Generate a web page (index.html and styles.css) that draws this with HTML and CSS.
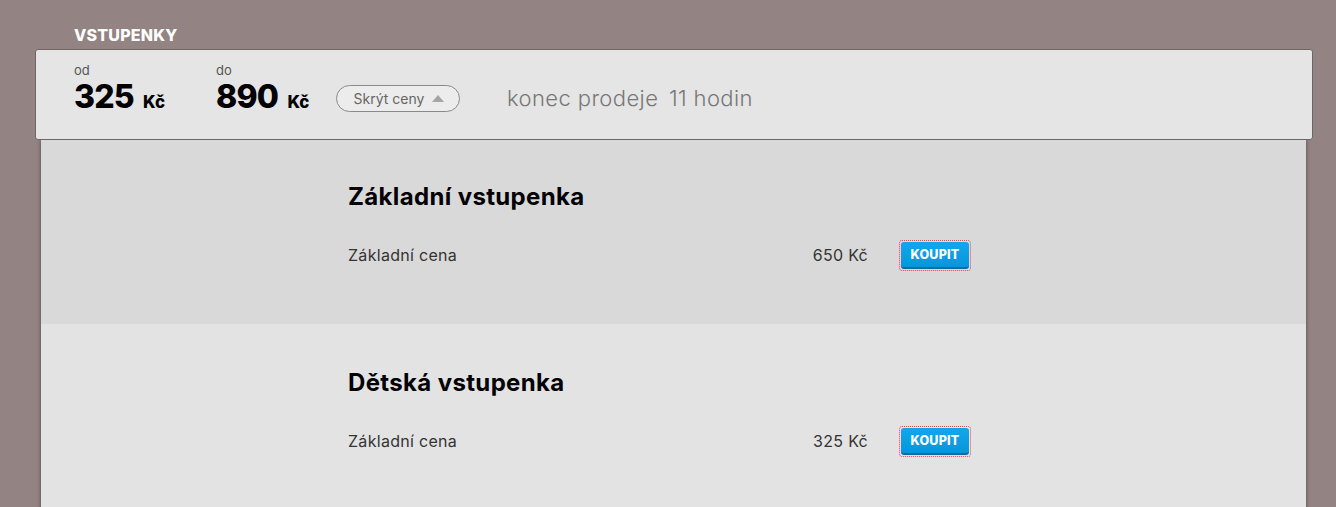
FILE: index.html
```html
<!DOCTYPE html>
<html lang="cs">
<head>
<meta charset="utf-8">
<title>Vstupenky</title>
<link rel="stylesheet" href="styles.css">
</head>
<body>
<div class="page">
  <h2 class="section-title">VSTUPENKY</h2>
  <div class="summary">
    <div class="range">
      <span class="range-label">od</span>
      <span class="range-value">325 <small>Kč</small></span>
    </div>
    <div class="range">
      <span class="range-label">do</span>
      <span class="range-value">890 <small>Kč</small></span>
    </div>
    <button class="toggle">Skrýt ceny <span class="tri"></span></button>
    <div class="deadline">konec prodeje <span class="hours">11 hodin</span></div>
  </div>
  <div class="panel">
    <div class="ticket ticket-dark">
      <h3 class="ticket-name">Základní vstupenka</h3>
      <div class="ticket-row">
        <span class="row-label">Základní cena</span>
        <span class="row-price">650 Kč</span>
        <span class="focus"><button class="buy">KOUPIT</button></span>
      </div>
    </div>
    <div class="ticket ticket-light">
      <h3 class="ticket-name">Dětská vstupenka</h3>
      <div class="ticket-row">
        <span class="row-label">Základní cena</span>
        <span class="row-price">325 Kč</span>
        <span class="focus"><button class="buy">KOUPIT</button></span>
      </div>
    </div>
  </div>
</div>
</body>
</html>
```

FILE: styles.css
```css
* { box-sizing: border-box; }
html, body { margin: 0; padding: 0; }
body {
  background: #938382;
  font-family: Inter, "Open Sans", sans-serif;
  height: 507px;
  overflow: hidden;
}
.page {
  padding: 0 23px 0 35px;
}
.section-title {
  margin: 0;
  padding: 26px 0 0 39px;
  height: 49px;
  font-size: 16px;
  line-height: 18px;
  font-weight: 800;
  color: #fff;
  letter-spacing: 0.2px;
}
.summary {
  position: relative;
  z-index: 2;
  height: 91px;
  background: #e5e5e5;
  border: 1px solid #6f6566;
  border-radius: 3px;
  display: flex;
  align-items: flex-start;
  padding: 12px 0 0 38px;
}
.range {
  display: flex;
  flex-direction: column;
  width: 142px;
}
.range-label {
  font-size: 13px;
  color: #555;
  line-height: 16px;
}
.range-value {
  font-size: 32px;
  font-weight: 800;
  color: #000;
  line-height: 38px;
  letter-spacing: -0.8px;
}
.range-value small {
  font-size: 17px;
  font-weight: 800;
  letter-spacing: 0;
  margin-left: 3px;
}
.toggle {
  margin: 23px 0 0 -22px;
  height: 27px;
  width: 124px;
  border: 1px solid #8a8a8a;
  border-radius: 14px;
  background: #ececec;
  font-family: inherit;
  font-size: 14px;
  color: #666;
  padding: 0 0 0 2px;
  display: flex;
  align-items: center;
  justify-content: center;
  gap: 8px;
  letter-spacing: 0;
}
.tri {
  width: 0; height: 0;
  border-left: 6px solid transparent;
  border-right: 6px solid transparent;
  border-bottom: 7px solid #a5a5a5;
}
.deadline {
  margin: 23px 0 0 47px;
  font-size: 22px;
  font-weight: 300;
  color: #777;
  letter-spacing: 0.4px;
}
.hours { margin-left: 4px; }
.panel {
  margin: 0 7px 0 6px;
  box-shadow: 0 0 4px rgba(0,0,0,0.45);
}
.ticket {
  padding: 43px 0 0 307px;
}
.ticket-dark { background: #d9d9d9; height: 184px; }
.ticket-light { background: #e3e3e3; height: 260px; padding-top: 45px; }
.ticket-name {
  margin: 0;
  font-size: 24px;
  font-weight: 700;
  color: #000;
  line-height: 28px;
  letter-spacing: 0.35px;
}
.ticket-row {
  margin-top: 28px;
  display: flex;
  align-items: center;
  width: 623px;
  height: 32px;
}
.row-label {
  flex: 1;
  font-size: 16px;
  color: #333;
  letter-spacing: 0.3px;
}
.row-price {
  font-size: 16px;
  color: #333;
  margin-right: 31px;
  letter-spacing: 0.3px;
}
.focus {
  display: inline-block;
  border: 1px dotted #e0474c;
  border-radius: 3px;
  padding: 1px;
}
.buy {
  display: block;
  width: 68px;
  height: 27px;
  border: 0;
  border-bottom: 2px solid #0b6ea3;
  border-radius: 3px;
  background: linear-gradient(#14a6ea, #0696db);
  color: #fff;
  font-family: inherit;
  font-size: 12.5px;
  font-weight: 800;
  letter-spacing: 0.2px;
  padding: 0;
}
```
